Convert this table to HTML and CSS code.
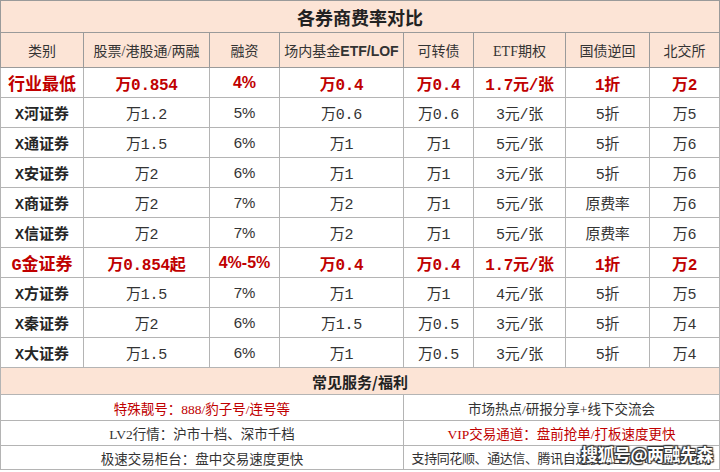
FILE: index.html
```html
<!DOCTYPE html>
<html lang="zh-CN">
<head>
<meta charset="utf-8">
<title>各券商费率对比</title>
<link rel="stylesheet" href="styles.css">
</head>
<body>
<div class="page">
<table class="fees">
  <colgroup>
    <col class="c1"><col class="c2"><col class="c3"><col class="c4">
    <col class="c5"><col class="c6"><col class="c7"><col class="c8">
  </colgroup>
  <tr class="title"><td colspan="8">各券商费率对比</td></tr>
  <tr class="head">
    <td>类别</td><td>股票/港股通/两融</td><td>融资</td><td>场内基金<span class="b-latin">ETF/LOF</span></td>
    <td>可转债</td><td>ETF期权</td><td>国债逆回</td><td>北交所</td>
  </tr>
  <tr class="row hot">
    <td class="name">行业最低</td><td>万0.854</td><td class="pct">4%</td><td>万0.4</td>
    <td>万0.4</td><td>1.7元/张</td><td>1折</td><td>万2</td>
  </tr>
  <tr class="row">
    <td class="name">X河证券</td><td>万1.2</td><td class="pct">5%</td><td>万0.6</td>
    <td>万0.6</td><td>3元/张</td><td>5折</td><td>万5</td>
  </tr>
  <tr class="row">
    <td class="name">X通证券</td><td>万1.5</td><td class="pct">6%</td><td>万1</td>
    <td>万1</td><td>5元/张</td><td>5折</td><td>万6</td>
  </tr>
  <tr class="row">
    <td class="name">X安证券</td><td>万2</td><td class="pct">6%</td><td>万1</td>
    <td>万1</td><td>3元/张</td><td>5折</td><td>万6</td>
  </tr>
  <tr class="row">
    <td class="name">X商证券</td><td>万2</td><td class="pct">7%</td><td>万2</td>
    <td>万1</td><td>5元/张</td><td>原费率</td><td>万6</td>
  </tr>
  <tr class="row">
    <td class="name">X信证券</td><td>万2</td><td class="pct">7%</td><td>万2</td>
    <td>万1</td><td>5元/张</td><td>原费率</td><td>万6</td>
  </tr>
  <tr class="row hot">
    <td class="name">G金证券</td><td>万0.854起</td><td class="pct">4%-5%</td><td>万0.4</td>
    <td>万0.4</td><td>1.7元/张</td><td>1折</td><td>万2</td>
  </tr>
  <tr class="row">
    <td class="name">X方证券</td><td>万1.5</td><td class="pct">7%</td><td>万1</td>
    <td>万1</td><td>4元/张</td><td>5折</td><td>万5</td>
  </tr>
  <tr class="row">
    <td class="name">X秦证券</td><td>万2</td><td class="pct">6%</td><td>万1.5</td>
    <td>万0.5</td><td>3元/张</td><td>5折</td><td>万4</td>
  </tr>
  <tr class="row">
    <td class="name">X大证券</td><td>万1.5</td><td class="pct">6%</td><td>万1</td>
    <td>万0.5</td><td>3元/张</td><td>5折</td><td>万4</td>
  </tr>
  <tr class="section"><td colspan="8">常见服务/福利</td></tr>
  <tr class="svc s1">
    <td colspan="4" class="red">特殊靓号：888/豹子号/连号等</td>
    <td colspan="4">市场热点/研报分享+线下交流会</td>
  </tr>
  <tr class="svc s2">
    <td colspan="4">LV2行情：沪市十档、深市千档</td>
    <td colspan="4" class="red">VIP交易通道：盘前抢单/打板速度更快</td>
  </tr>
  <tr class="svc s3">
    <td colspan="4">极速交易柜台：盘中交易速度更快</td>
    <td colspan="4" class="long">支持同花顺、通达信、腾讯自选股等主流APP登录使用</td>
  </tr>
</table>
<div class="watermark">搜狐号@两融先森</div>
</div>
</body>
</html>
```

FILE: styles.css
```css
html, body {
  margin: 0;
  padding: 0;
  background: #ffffff;
}

.page {
  position: relative;
  width: 720px;
  height: 472px;
  overflow: hidden;
}

.fees {
  border-collapse: collapse;
  table-layout: fixed;
  width: 719px;
  font-family: "Liberation Mono", "Noto Sans CJK SC", monospace;
  color: #333333;
}

.c1 { width: 83px; }
.c2 { width: 126px; }
.c3 { width: 70px; }
.c4 { width: 124px; }
.c5 { width: 70px; }
.c6 { width: 92px; }
.c7 { width: 84px; }
.c8 { width: 70px; }

.fees td {
  border: 1px solid #b4b4b4;
  text-align: center;
  vertical-align: middle;
  padding: 0;
  white-space: nowrap;
  overflow: hidden;
}

.title td {
  height: 31px;
  background: #fce4d6;
  font-family: "Noto Sans CJK SC", sans-serif;
  font-weight: 700;
  font-size: 18px;
  color: #222222;
  border-color: #9a9a9a;
}

.head td {
  height: 34px;
  background: #fce4d6;
  font-family: "Liberation Serif", "Noto Sans CJK SC", serif;
  font-size: 14px;
  color: #333333;
  border-color: #9a9a9a;
}

.b-latin {
  font-family: "Liberation Sans", sans-serif;
  font-weight: 700;
  font-size: 14px;
}

.row td {
  height: 29px;
  font-size: 15px;
  letter-spacing: -0.3px;
}

.row td.name {
  font-family: "Liberation Mono", "Noto Sans CJK SC", monospace;
  font-weight: 700;
  color: #262626;
  letter-spacing: 0;
}

.row td.pct {
  font-family: "Liberation Sans", sans-serif;
  letter-spacing: 0;
}

.row.hot td {
  color: #c00000;
  font-weight: 700;
  font-size: 16px;
}

.row.hot td.name {
  color: #c00000;
  font-size: 17px;
}

.section td {
  height: 26px;
  background: #fce4d6;
  font-family: "Noto Sans CJK SC", sans-serif;
  font-weight: 700;
  font-size: 15px;
  color: #222222;
}

.svc td {
  font-family: "Liberation Serif", "Noto Sans CJK SC", serif;
  font-size: 13.5px;
  color: #333333;
}

.svc td.red {
  color: #c00000;
}

.svc td.long {
  font-size: 13px;
  letter-spacing: -0.4px;
}

.s1 td { height: 25px; }
.s2 td { height: 24px; }
.s3 td { height: 23px; }

.watermark {
  position: absolute;
  left: 581px;
  top: 441px;
  font-family: "Noto Sans CJK SC", sans-serif;
  font-weight: 700;
  font-size: 17px;
  color: #ffffff;
  letter-spacing: -0.5px;
  text-shadow: 0 0 2px #333, 1px 1px 1px #333, -1px -1px 1px #333, 1px -1px 1px #333, -1px 1px 1px #333;
}
```
